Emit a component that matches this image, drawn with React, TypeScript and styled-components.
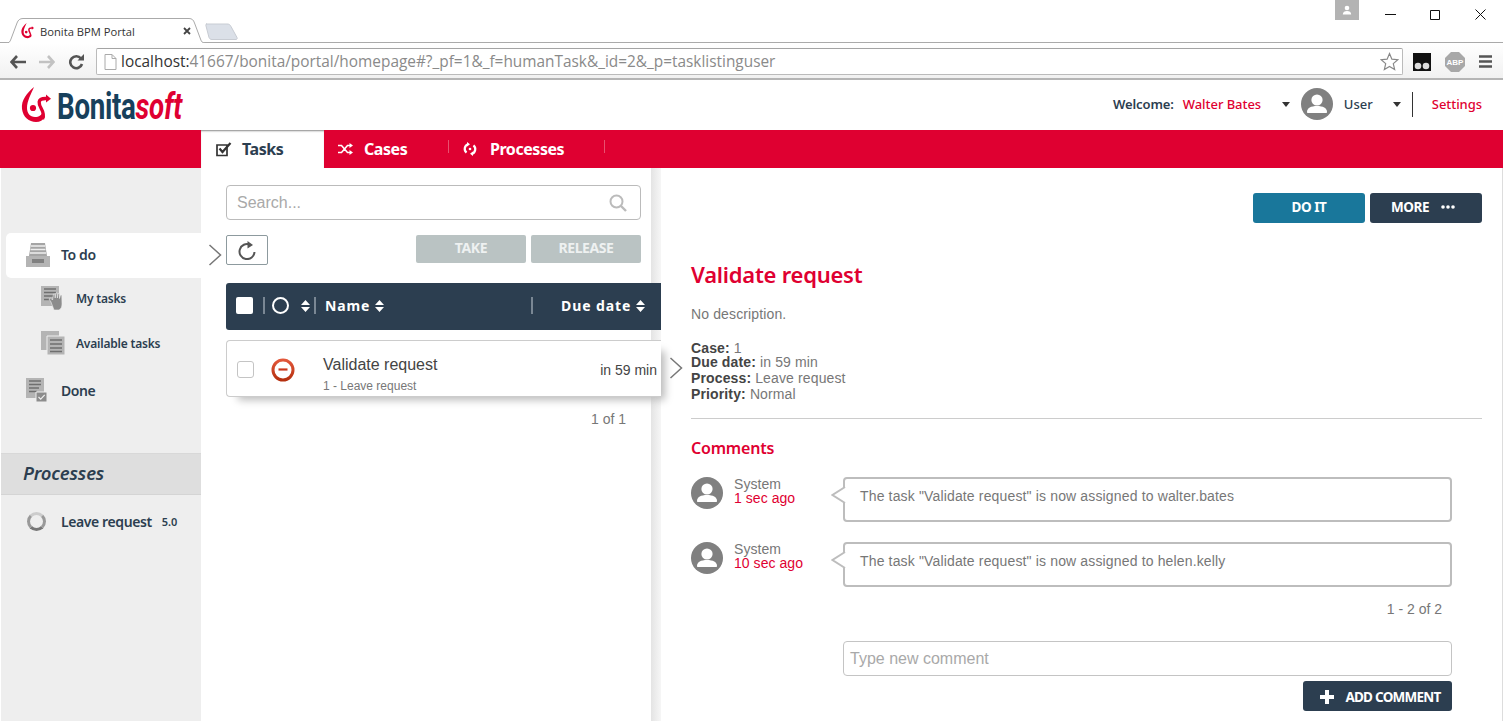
import styled, { createGlobalStyle } from 'styled-components';

const GlobalStyle = createGlobalStyle`
  html, body {
    margin: 0;
    padding: 0;
    height: 100%;
    overflow: hidden;
    background: #fff;
    font-family: "Liberation Sans", Arial, sans-serif;
  }
  * { box-sizing: border-box; }
`;

const heading = `"Noto Sans", "Open Sans", sans-serif`;
const RED = '#df0031';
const NAVY = '#2c3e50';

const Page = styled.div`
  width: 1503px;
  height: 721px;
  overflow: hidden;
  display: flex;
  flex-direction: column;
`;

/* browser chrome */
const TabStrip = styled.div`
  height: 43px;
  flex: none;
  position: relative;
  border-bottom: 1px solid #aaa;
  display: flex;
  align-items: flex-end;
  justify-content: space-between;
  padding-left: 6px;
`;

const Tab = styled.div`
  width: 203px;
  height: 25px;
  margin-bottom: -1px;
  position: relative;
  display: flex;
  align-items: center;
  padding: 1px 18px 0 15px;
  font: 11.2px "Open Sans", sans-serif;
  color: #333;
`;

const TabShape = styled.svg`
  position: absolute;
  left: 0;
  top: 0;
`;

const TabLogo = styled.div`
  position: relative;
  display: flex;
`;

const TabLabel = styled.span`
  position: relative;
  margin-left: 6px;
  flex: 1;
`;

const TabClose = styled.svg`
  position: relative;
`;

const NewTab = styled.svg`
  position: absolute;
  left: 205px;
  bottom: 2px;
`;

const WindowControls = styled.div`
  position: absolute;
  top: 0;
  right: 0;
  display: flex;
  align-items: flex-start;
`;

const ProfileBadge = styled.div`
  width: 24px;
  height: 20px;
  background: #b3b3b3;
  margin-right: 9px;
  display: flex;
  align-items: center;
  justify-content: center;
`;

const WinButton = styled.div`
  width: 45px;
  height: 28px;
  display: flex;
  align-items: center;
  justify-content: center;
`;

const Toolbar = styled.div`
  height: 37px;
  flex: none;
  display: flex;
  align-items: center;
  background: linear-gradient(#fff, #f1f1f1);
  border-bottom: 2px solid #b5b5b5;
  padding: 2px 10px 0 10px;
`;

const NavIcons = styled.div`
  display: flex;
  align-items: center;
  gap: 13px;
  width: 86px;
`;

const Omnibox = styled.div`
  width: 1307px;
  height: 27px;
  background: #fff;
  border: 1px solid #bbb;
  border-top-color: #a4a4a4;
  border-radius: 2px;
  display: flex;
  align-items: center;
  padding: 0 3px 0 7px;
  font: 15.4px "Open Sans", sans-serif;
  color: #8a8a8a;
  white-space: nowrap;
`;

const Host = styled.span<{ $gap?: number }>`
  color: #333;
  margin-left: ${(p) => p.$gap ?? 0}px;
`;

const UrlPath = styled.span`
  flex: 1;
`;

const Extensions = styled.div`
  display: flex;
  align-items: center;
  margin-left: 10px;
  gap: 14px;
`;

const AbpText = styled.text`
  font: bold 8px "Liberation Sans", sans-serif;
  fill: #fff;
`;

/* portal header */
const Header = styled.header`
  height: 50px;
  flex: none;
  display: flex;
  align-items: center;
  padding: 0 21px 2px;
`;

const Logo = styled.div`
  display: flex;
  align-items: center;
  gap: 6px;
  flex: 1;
`;

const LogoWord = styled.div`
  font: 700 36px/36px "Roboto", sans-serif;
  color: #17405c;
  transform: scaleX(0.77);
  transform-origin: left center;
  letter-spacing: -0.4px;
  white-space: nowrap;
  width: 125px;
  padding-top: 5px;
  span { color: ${RED}; }
`;

const Welcome = styled.div`
  font: 600 13px ${heading};
  letter-spacing: -0.1px;
  color: ${NAVY};
  margin-right: 9px;
`;

const RedLink = styled.a<{ $width?: number }>`
  font: 500 13px ${heading};
  letter-spacing: -0.05px;
  color: ${RED};
  ${(p) => (p.$width ? `width: ${p.$width}px;` : '')}
`;

const Caret = styled.span<{ $after?: number }>`
  width: 0;
  height: 0;
  border: 4.5px solid transparent;
  border-top: 5px solid #333;
  border-bottom: 0;
  display: inline-block;
  margin-right: ${(p) => p.$after ?? 0}px;
`;

const UserLabel = styled.div`
  font: 500 13px ${heading};
  color: ${NAVY};
  margin-left: 11px;
  width: 49px;
`;

const Divider = styled.div`
  width: 1px;
  height: 25px;
  background: #333;
  margin: 0 19px 0 10px;
`;

const NavBar = styled.nav`
  height: 38px;
  flex: none;
  background: ${RED};
  display: flex;
  padding-left: 201px;
`;

const NavItem = styled.div<{ $active?: boolean; $width: number; $gap: number }>`
  width: ${(p) => p.$width}px;
  display: flex;
  align-items: center;
  gap: ${(p) => p.$gap}px;
  padding-left: ${(p) => (p.$active ? 15 : 14)}px;
  font: 700 16px ${heading};
  letter-spacing: -0.45px;
  position: relative;
  background: ${(p) => (p.$active ? '#fff' : 'transparent')};
  color: ${(p) => (p.$active ? NAVY : '#fff')};
  box-shadow: ${(p) => (p.$active ? 'inset 0 2px 2px -1px #888' : 'none')};
  ${(p) => (p.$active ? '' : `&::after {
    content: "";
    position: absolute;
    right: 0;
    top: 10px;
    height: 13px;
    width: 1px;
    background: #e9516f;
  }`)}
`;

/* body columns */
const Body = styled.div`
  flex: 1;
  display: flex;
  min-height: 0;
`;

const Sidebar = styled.aside`
  width: 201px;
  flex: none;
  background: #eee;
  border-left: 1px solid #fff;
  padding-top: 65px;
  display: flex;
  flex-direction: column;
`;

const SideItem = styled.div<{ $active?: boolean; $sub?: boolean; $height: number }>`
  height: ${(p) => p.$height}px;
  display: flex;
  align-items: center;
  margin-left: ${(p) => (p.$active ? 5 : 0)}px;
  padding: 0 0 2px ${(p) => (p.$sub ? 40 : p.$active ? 20 : 25)}px;
  gap: 11px;
  background: ${(p) => (p.$active ? '#fff' : 'transparent')};
  border-radius: 5px 0 0 5px;
  font: 600 ${(p) => (p.$sub ? 12 : 14)}px ${heading};
  letter-spacing: ${(p) => (p.$sub ? -0.2 : -0.4)}px;
  color: ${NAVY};
`;

const SideHeading = styled.div`
  height: 42px;
  margin-top: 39px;
  background: #dedede;
  border-top: 1px solid #d8d8d8;
  border-bottom: 1px solid #d4d4d4;
  display: flex;
  align-items: center;
  padding: 0 0 3px 22px;
  font: italic 600 18.500px ${heading};
  letter-spacing: -0.2px;
  color: ${NAVY};
`;

const ProcessRow = styled.div`
  height: 52px;
  display: flex;
  align-items: center;
  padding-left: 26px;
  font: 600 14px ${heading};
  letter-spacing: -0.4px;
  color: ${NAVY};
`;

const ProcessRing = styled.span`
  width: 19px;
  height: 19px;
  border-radius: 50%;
  border: 3px solid #999;
  border-bottom-color: #777;
  border-top-color: #ccc;
  margin-right: 15px;
`;

const ProcessVersion = styled.span`
  font-size: 11px;
  margin-left: 10px;
  letter-spacing: 0;
`;

const TaskPane = styled.section`
  width: 460px;
  flex: none;
  position: relative;
  padding: 17px 0 0 25px;
  background: linear-gradient(90deg, #fff 450px, #e4e4e4 450px, #f6f6f6 460px);
`;

const SearchBox = styled.div`
  width: 415px;
  height: 35px;
  border: 1px solid #bbb;
  border-radius: 4px;
  background: #fff;
  display: flex;
  align-items: center;
  justify-content: space-between;
  padding: 0 13px 0 10px;
  font-size: 16px;
  color: #a9a9a9;
`;

const ActionRow = styled.div`
  width: 415px;
  margin-top: 15px;
  height: 48px;
  display: flex;
  align-items: flex-start;
  gap: 5px;
`;

const RefreshButton = styled.div`
  width: 42px;
  height: 30px;
  border: 1px solid #8d9a9e;
  border-radius: 2px;
  display: flex;
  align-items: center;
  justify-content: center;
  margin-right: auto;
`;

const DisabledButton = styled.div`
  width: 110px;
  height: 28px;
  padding-bottom: 4px;
  background: #bac3c3;
  border-radius: 2px;
  display: flex;
  align-items: center;
  justify-content: center;
  font: 700 14px ${heading};
  letter-spacing: -0.4px;
  color: #eef1f1;
`;

const TableHead = styled.div`
  width: 435px;
  height: 47px;
  padding: 0 0 2px 10px;
  background: ${NAVY};
  border-radius: 3px 0 0 3px;
  display: flex;
  align-items: center;
  font: 700 14px ${heading};
  letter-spacing: 0.9px;
  color: #fff;
`;

const HeadCheck = styled.span`
  width: 17px;
  height: 17px;
  background: #fff;
  border-radius: 2px;
  margin-right: 10px;
`;

const HeadSep = styled.span<{ $gap: number; $before?: number }>`
  width: 2px;
  height: 17px;
  background: #7a8794;
  margin-left: ${(p) => p.$before ?? 0}px;
  margin-right: ${(p) => p.$gap}px;
`;

const HeadRing = styled.span`
  width: 17px;
  height: 17px;
  border-radius: 50%;
  border: 2.5px solid #fff;
  margin-right: 12px;
`;

const HeadLabel = styled.span<{ $width: number }>`
  width: ${(p) => p.$width}px;
  display: inline-flex;
  align-items: center;
  gap: 5px;
  white-space: nowrap;
`;

const SortIcon = styled.svg`
  flex: none;
`;

const TaskRow = styled.div`
  width: 435px;
  height: 57px;
  margin-top: 10px;
  background: #fff;
  border: 1px solid #ccc;
  border-right: 0;
  border-radius: 4px 0 0 4px;
  box-shadow: 8px 7px 8px -4px #bbb;
  display: flex;
  align-items: center;
  padding: 2px 0 0 10px;
`;

const RowCheck = styled.span`
  width: 17px;
  height: 17px;
  border: 1px solid #c4c4c4;
  border-radius: 3px;
  margin-right: 17px;
`;

const TaskText = styled.div`
  margin-left: 28px;
  flex: 1;
  padding-top: 13px;
`;

const TaskName = styled.div`
  font-size: 16px;
  line-height: 20px;
  color: #444;
`;

const TaskCase = styled.div`
  font-size: 12px;
  line-height: 22px;
  color: #777;
`;

const TaskDue = styled.div`
  font-size: 14px;
  color: #444;
  margin-right: 4px;
`;

const Pager = styled.div<{ $right: number; $top: number }>`
  font-size: 14px;
  line-height: 16px;
  color: #777;
  text-align: right;
  padding-right: ${(p) => p.$right}px;
  margin-top: ${(p) => p.$top}px;
`;

const Chevron = styled.svg<{ $left: number; $top: number }>`
  position: absolute;
  left: ${(p) => p.$left}px;
  top: ${(p) => p.$top}px;
`;

const Detail = styled.main`
  flex: 1;
  min-width: 0;
  padding: 25px 20px 0 30px;
  border-right: 1px solid #ddd;
`;

const DetailActions = styled.div`
  display: flex;
  justify-content: flex-end;
  gap: 5px;
`;

const SolidButton = styled.div<{
  $bg: string;
  $width: number;
  $gap?: number;
  $pad?: string;
  $tracking?: number;
}>`
  width: ${(p) => p.$width}px;
  height: 30px;
  padding: ${(p) => p.$pad ?? '0 0 3px'};
  background: ${(p) => p.$bg};
  border-radius: 3px;
  display: flex;
  align-items: center;
  justify-content: center;
  gap: ${(p) => p.$gap ?? 12}px;
  font: 700 13.500px ${heading};
  letter-spacing: ${(p) => p.$tracking ?? -0.45}px;
  color: #fff;
`;

const Title = styled.h1`
  margin: 36px 0 0;
  font: 600 22px/30px ${heading};
  letter-spacing: -0.25px;
  color: ${RED};
`;

const Description = styled.p`
  margin: 17px 0 0;
  font-size: 14px;
  line-height: 16px;
  letter-spacing: 0.13px;
  color: #777;
`;

const Facts = styled.div`
  margin-top: 18px;
  font-size: 14px;
  letter-spacing: 0.13px;
  color: #777;
  padding-bottom: 16px;
  border-bottom: 1px solid #ccc;
`;

const Fact = styled.div<{ $height: number }>`
  height: ${(p) => p.$height}px;
  line-height: 16px;
  b { color: #444; }
`;

const CommentsTitle = styled.h2`
  margin: 18px 0 0;
  font: 600 16px/22px ${heading};
  letter-spacing: -0.2px;
  color: ${RED};
`;

const CommentList = styled.div`
  margin-top: 18px;
  display: flex;
  flex-direction: column;
  gap: 20px;
`;

const CommentRow = styled.div`
  display: flex;
  height: 45px;
`;

const CommentMeta = styled.div`
  width: 109px;
  margin-left: 11px;
  font-size: 14px;
  line-height: 14px;
  letter-spacing: 0.05px;
  color: #777;
`;

const CommentTime = styled.div`
  color: ${RED};
`;

const Bubble = styled.div`
  width: 609px;
  height: 45px;
  position: relative;
  border: 2px solid #bdbdbd;
  border-radius: 4px;
  padding: 8px 15px;
  font-size: 14px;
  line-height: 18px;
  letter-spacing: 0.15px;
  color: #777;
`;

const BubbleTail = styled.svg`
  position: absolute;
  left: -14px;
  top: 7px;
`;

const CommentForm = styled.div`
  margin-left: 152px;
  width: 609px;
  margin-top: 24px;
  display: flex;
  flex-direction: column;
  align-items: flex-end;
  gap: 5px;
`;

const CommentInput = styled.div`
  width: 100%;
  height: 35px;
  border: 1px solid #c4c4c4;
  border-radius: 4px;
  padding: 0 6px;
  display: flex;
  align-items: center;
  font-size: 16px;
  color: #a9a9a9;
`;

function Avatar({ size }: { size: number }) {
  return (
    <svg width={size} height={size} viewBox="0 0 32 32" style={{ flex: 'none' }}>
      <circle cx="16" cy="16" r="16" fill="#808080" />
      <circle cx="16" cy="12" r="5.6" fill="#fff" />
      <path d="M6 24c0-4 4-6 10-6s10 2 10 6c0 .6-.4 1-1 1H7c-.6 0-1-.4-1-1z" fill="#fff" />
    </svg>
  );
}

function Swirl({ size }: { size: number }) {
  return (
    <svg width={size} height={size * 35 / 30} viewBox="0 0 30 35" style={{ flex: 'none' }}>
      <path d="M13 0C6 6 0 13 1 22c1 8 7 13 14 13 4 0 7-2 9-5l-2-6c-1 4-4 6-8 6-5 0-8-4-8-9 0-7 4-14 7-21z" fill={RED} />
      <path d="M21.500 32c3.500-8-4-11-3.300-17 .4-3 4-3.700 8-3.400" stroke={RED} strokeWidth="3.400" fill="none" />
      <path d="M25 7.500l5 4.300-5 3.700z" fill={RED} />
      <circle cx="12" cy="21" r="3.100" fill={RED} />
    </svg>
  );
}

function Sort() {
  return (
    <SortIcon width="9" height="12" viewBox="0 0 9 12">
      <path d="M4.500 0 9 5H0zM0 7h9l-4.500 5z" fill="#fff" />
    </SortIcon>
  );
}

function TrayIcon() {
  return (
    <svg width="24" height="24" viewBox="0 0 24 24">
      <path d="M0 13h24v11H0z" fill="#b4b4b4" />
      <path d="M5 0h14l2 13H3z" fill="#a5a5a5" />
      <path d="M5 3h14M4.500 6.500h15M4 10h16" stroke="#eee" strokeWidth="1.300" />
      <path d="M6 16h12v4H6z" fill="#808080" />
    </svg>
  );
}

function SheetIcon({ variant }: { variant: 'hand' | 'stack' | 'check' }) {
  return (
    <svg width="24" height="24" viewBox="0 0 24 24">
      {variant === 'stack' && <path d="M0 0h18v19H0z" fill="#b4b4b4" />}
      {variant === 'stack' && <path d="M6 5h18v19H6z" fill="#b4b4b4" stroke="#eee" />}
      {variant === 'stack' && <path d="M9 9h12M9 13h12M9 17h12M9 20.500h12" stroke="#6f6f6f" strokeWidth="1.400" />}
      {variant !== 'stack' && <path d="M0 0h18v20H0z" fill="#b4b4b4" />}
      {variant !== 'stack' && <path d="M3 3h12M3 6.500h12M3 10h10M3 13.500h8" stroke="#6f6f6f" strokeWidth="1.400" />}
      {variant === 'hand' && (
        <path d="M10 16l-2-3 1.500-1 2 2 1-6h1.300l.4 4 .6-5h1.400l.2 5 .8-4.500h1.300l0 5 1-3.500h1.300L21 18c0 3-1 5-3 6h-5c-1-3-2-5-3-8z" fill="#8c8c8c" stroke="#eee" strokeWidth=".6" />
      )}
      {variant === 'check' && <path d="M10 14h11v10H10z" fill="#8c8c8c" stroke="#eee" />}
      {variant === 'check' && <path d="M12.500 19l2.200 2.200 4-4.400" stroke="#eee" strokeWidth="1.200" fill="none" />}
    </svg>
  );
}

function Comment({ time, text }: { time: string; text: string }) {
  return (
    <CommentRow>
      <Avatar size={32} />
      <CommentMeta>
        System
        <CommentTime>{time}</CommentTime>
      </CommentMeta>
      <Bubble>
        <BubbleTail width="15" height="18" viewBox="0 0 15 18">
          <path d="M14 1 1.500 9 14 17" fill="#fff" stroke="#bdbdbd" strokeWidth="2" />
          <path d="M14 2.500v13h1v-13z" fill="#fff" />
        </BubbleTail>
        {text}
      </Bubble>
    </CommentRow>
  );
}

export default function App() {
  return (
    <Page>
      <GlobalStyle />
      <TabStrip>
        <Tab>
          <TabShape width="203" height="25" viewBox="0 0 203 25">
            <path d="M0 25c3 0 4-1 5-4l6-16c1-3 3-4.500 6-4.500h166c3 0 4.500 1.500 5.500 4.500l6 16c1 3 2 4 5 4" fill="#fff" stroke="#aaa" />
          </TabShape>
          <TabLogo><Swirl size={13} /></TabLogo>
          <TabLabel>Bonita BPM Portal</TabLabel>
          <TabClose width="8" height="8" viewBox="0 0 8 8">
            <path d="M1 1l6 6M7 1 1 7" stroke="#444" strokeWidth="1.800" />
          </TabClose>
        </Tab>
        <NewTab width="34" height="17" viewBox="0 0 34 17">
          <path d="M1 1h21c2 0 3 .6 4 2.500l6 11c.5 1.200 0 2-1 2H7c-1.500 0-2.400-.6-3-2L1 3c-.4-1.200 0-2 1-2z" fill="#dbe0e8" stroke="#c8ccd3" />
        </NewTab>
        <WindowControls>
          <ProfileBadge>
            <svg width="10" height="10" viewBox="0 0 10 10">
              <circle cx="5" cy="3" r="2.300" fill="#fff" />
              <path d="M.8 9.500c0-2.500 1.800-3.500 4.200-3.500s4.200 1 4.200 3.500z" fill="#fff" />
            </svg>
          </ProfileBadge>
          <WinButton>
            <svg width="11" height="11" viewBox="0 0 11 11"><path d="M0 5.500h11" stroke="#111" /></svg>
          </WinButton>
          <WinButton>
            <svg width="11" height="11" viewBox="0 0 11 11"><path d="M.5 1.500h9v9h-9z" stroke="#111" fill="none" /></svg>
          </WinButton>
          <WinButton>
            <svg width="11" height="11" viewBox="0 0 11 11"><path d="M.5.500l10 10M10.500.500l-10 10" stroke="#111" /></svg>
          </WinButton>
        </WindowControls>
      </TabStrip>

      <Toolbar>
        <NavIcons>
          <svg width="16" height="14" viewBox="0 0 16 14"><path d="M7 1 1.500 7 7 13M2 7h14" stroke="#555" strokeWidth="2.600" fill="none" /></svg>
          <svg width="16" height="14" viewBox="0 0 16 14"><path d="M9 1l5.500 6L9 13M14 7H0" stroke="#c2c2c2" strokeWidth="2.600" fill="none" /></svg>
          <svg width="16" height="16" viewBox="0 0 16 16">
            <path d="M13 4.500A6 6 0 1 0 14 10" stroke="#555" strokeWidth="2.600" fill="none" />
            <path d="M9.500 6.500H16V0z" fill="#555" />
          </svg>
        </NavIcons>
        <Omnibox>
          <svg width="13" height="16" viewBox="0 0 13 16"><path d="M1 .5h7l4 4v11H1zM8 .5v4h4" stroke="#aaa" fill="#fff" /></svg>
          <Host $gap={4}>localhost:</Host>
          <UrlPath>41667/bonita/portal/homepage#?_pf=1&amp;_f=humanTask&amp;_id=2&amp;_p=tasklistinguser</UrlPath>
          <svg width="19" height="19" viewBox="0 0 24 24"><path d="M12 2l3 7 7.500.7-5.700 5 1.700 7.300L12 18.200 5.500 22l1.700-7.300-5.700-5L9 9z" fill="#fff" stroke="#888" strokeWidth="1.500" /></svg>
        </Omnibox>
        <Extensions>
          <svg width="18" height="18" viewBox="0 0 18 18">
            <path d="M0 0h18v18H0z" fill="#111" />
            <circle cx="5" cy="13" r="3.300" fill="#ddd" />
            <circle cx="13" cy="13" r="3.300" fill="#ddd" />
          </svg>
          <svg width="20" height="20" viewBox="0 0 20 20">
            <path d="M6 0h8l6 6v8l-6 6H6l-6-6V6z" fill="#a8a8a8" />
            <AbpText x="10" y="13" textAnchor="middle">ABP</AbpText>
          </svg>
          <svg width="13" height="13" viewBox="0 0 13 13"><path d="M0 1.500h13M0 6.500h13M0 11.500h13" stroke="#555" strokeWidth="2.400" /></svg>
        </Extensions>
      </Toolbar>

      <Header>
        <Logo>
          <Swirl size={30} />
          <LogoWord>Bonita<span><i>soft</i></span></LogoWord>
        </Logo>
        <Welcome>Welcome:</Welcome>
        <RedLink $width={99}>Walter Bates</RedLink>
        <Caret $after={11} />
        <Avatar size={32} />
        <UserLabel>User</UserLabel>
        <Caret $after={1} />
        <Divider />
        <RedLink>Settings</RedLink>
      </Header>

      <NavBar>
        <NavItem $active $width={123} $gap={10}>
          <svg width="16" height="15" viewBox="0 0 16 15">
            <path d="M1 3h10v10.500H1z" stroke="#333" strokeWidth="1.700" fill="none" />
            <path d="M3.500 6.500 6.500 10 14.500 1" stroke="#333" strokeWidth="2.200" fill="none" />
          </svg>
          Tasks
        </NavItem>
        <NavItem $width={125} $gap={11}>
          <svg width="15" height="12" viewBox="0 0 15 12">
            <path d="M0 2.500h3.500l6 7H13M0 9.500h3.500l6-7H13" stroke="#fff" strokeWidth="1.600" fill="none" />
            <path d="M11.500 0 15 2.500 11.500 5zM11.500 7 15 9.500 11.500 12z" fill="#fff" />
          </svg>
          Cases
        </NavItem>
        <NavItem $width={156} $gap={13}>
          <svg width="14" height="14" viewBox="0 0 14 14">
            <path d="M5 2.200A5 5 0 0 0 3.500 10.700M9 11.800A5 5 0 0 0 10.500 3.300" stroke="#fff" strokeWidth="2.200" fill="none" />
            <path d="M4 0v4.500L7 2.200zM10 14V9.500L7 11.800z" fill="#fff" />
            <circle cx="7" cy="7" r="1.300" fill="#fff" />
          </svg>
          Processes
        </NavItem>
      </NavBar>

      <Body>
        <Sidebar>
          <SideItem $active $height={45}>
            <TrayIcon />
            To do
          </SideItem>
          <SideItem $sub $height={42}>
            <SheetIcon variant="hand" />
            My tasks
          </SideItem>
          <SideItem $sub $height={48}>
            <SheetIcon variant="stack" />
            Available tasks
          </SideItem>
          <SideItem $height={46}>
            <SheetIcon variant="check" />
            Done
          </SideItem>
          <SideHeading>Processes</SideHeading>
          <ProcessRow>
            <ProcessRing />
            Leave request
            <ProcessVersion>5.0</ProcessVersion>
          </ProcessRow>
        </Sidebar>

        <TaskPane>
          <Chevron $left={7} $top={76} width="14" height="22" viewBox="0 0 14 22">
            <path d="M1.500 1 12.500 11 1.500 21" stroke="#777" strokeWidth="1.500" fill="none" />
          </Chevron>
          <Chevron $left={468} $top={189} width="14" height="22" viewBox="0 0 14 22">
            <path d="M1.500 1 12.500 11 1.500 21" stroke="#777" strokeWidth="1.500" fill="none" />
          </Chevron>
          <SearchBox>
            Search...
            <svg width="18" height="18" viewBox="0 0 18 18">
              <circle cx="7.500" cy="7.500" r="6" stroke="#bbb" strokeWidth="2" fill="none" />
              <path d="M12 12l5 5" stroke="#bbb" strokeWidth="2.400" />
            </svg>
          </SearchBox>
          <ActionRow>
            <RefreshButton>
              <svg width="18" height="19" viewBox="0 0 18 19">
                <path d="M12 3.700A7.500 7.500 0 1 0 16.500 11" stroke="#555" strokeWidth="2" fill="none" />
                <path d="M9.500 0v7.500L15 4z" fill="#555" />
              </svg>
            </RefreshButton>
            <DisabledButton>TAKE</DisabledButton>
            <DisabledButton>RELEASE</DisabledButton>
          </ActionRow>
          <TableHead>
            <HeadCheck />
            <HeadSep $gap={7} />
            <HeadRing />
            <Sort />
            <HeadSep $gap={9} $before={4} />
            <HeadLabel $width={206}>Name <Sort /></HeadLabel>
            <HeadSep $gap={28} />
            <HeadLabel $width={90}>Due date <Sort /></HeadLabel>
          </TableHead>
          <TaskRow>
            <RowCheck />
            <svg width="24" height="24" viewBox="0 0 24 24" style={{ flex: 'none' }}>
              <defs>
                <linearGradient id="stopRing" x1="0" y1="0" x2="0" y2="1">
                  <stop offset="0" stopColor="#e2573a" />
                  <stop offset="1" stopColor="#b5300f" />
                </linearGradient>
              </defs>
              <circle cx="12" cy="12" r="10" stroke="url(#stopRing)" strokeWidth="3" fill="#fff" />
              <path d="M7.500 11.500h9" stroke="#c9381c" strokeWidth="2.200" />
            </svg>
            <TaskText>
              <TaskName>Validate request</TaskName>
              <TaskCase>1 - Leave request</TaskCase>
            </TaskText>
            <TaskDue>in 59 min</TaskDue>
          </TaskRow>
          <Pager $right={35} $top={14}>1 of 1</Pager>
        </TaskPane>

        <Detail>
          <DetailActions>
            <SolidButton $bg="#19779b" $width={112}>DO IT</SolidButton>
            <SolidButton $bg={NAVY} $width={112} $pad="0 6px 3px 0">
              MORE
              <svg width="14" height="4" viewBox="0 0 14 4">
                <circle cx="2" cy="2" r="1.800" fill="#fff" />
                <circle cx="7" cy="2" r="1.800" fill="#fff" />
                <circle cx="12" cy="2" r="1.800" fill="#fff" />
              </svg>
            </SolidButton>
          </DetailActions>
          <Title>Validate request</Title>
          <Description>No description.</Description>
          <Facts>
            <Fact $height={14}><b>Case:</b> 1</Fact>
            <Fact $height={16}><b>Due date:</b> in 59 min</Fact>
            <Fact $height={16}><b>Process:</b> Leave request</Fact>
            <Fact $height={16}><b>Priority:</b> Normal</Fact>
          </Facts>
          <CommentsTitle>Comments</CommentsTitle>
          <CommentList>
            <Comment time="1 sec ago" text={'The task "Validate request" is now assigned to walter.bates'} />
            <Comment time="10 sec ago" text={'The task "Validate request" is now assigned to helen.kelly'} />
          </CommentList>
          <Pager $right={40} $top={14}>1 - 2 of 2</Pager>
          <CommentForm>
            <CommentInput>Type new comment</CommentInput>
            <SolidButton $bg={NAVY} $width={149} $gap={11} $pad="1px 0 0 6px" $tracking={-0.75}>
              <svg width="14" height="14" viewBox="0 0 14 14"><path d="M7 0v14M0 7h14" stroke="#fff" strokeWidth="4" /></svg>
              ADD COMMENT
            </SolidButton>
          </CommentForm>
        </Detail>
      </Body>
    </Page>
  );
}
